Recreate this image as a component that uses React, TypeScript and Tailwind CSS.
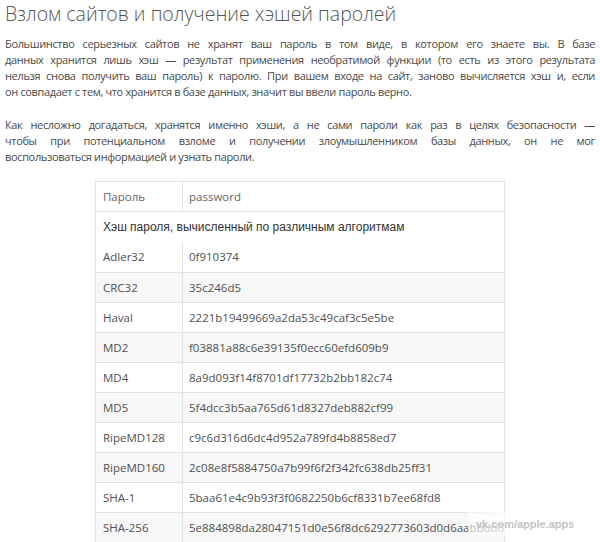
const ROWS: [string, string][] = [
  ['Adler32', '0f910374'],
  ['CRC32', '35c246d5'],
  ['Haval', '2221b19499669a2da53c49caf3c5e5be'],
  ['MD2', 'f03881a88c6e39135f0ecc60efd609b9'],
  ['MD4', '8a9d093f14f8701df17732b2bb182c74'],
  ['MD5', '5f4dcc3b5aa765d61d8327deb882cf99'],
  ['RipeMD128', 'c9c6d316d6dc4d952a789fd4b8858ed7'],
  ['RipeMD160', '2c08e8f5884750a7b99f6f2f342fc638db25ff31'],
  ['SHA-1', '5baa61e4c9b93f3f0682250b6cf8331b7ee68fd8'],
  ['SHA-256', '5e884898da28047151d0e56f8dc6292773603d0d6aabbdd62a11ef721d1542d8'],
]

const PARA_1 = [
  'Большинство серьезных сайтов не хранят ваш пароль в том виде, в котором его знаете вы. В базе',
  'данных хранится лишь хэш — результат применения необратимой функции (то есть из этого результата',
  'нельзя снова получить ваш пароль) к паролю. При вашем входе на сайт, заново вычисляется хэш и, если',
  'он совпадает с тем, что хранится в базе данных, значит вы ввели пароль верно.',
]

const PARA_2 = [
  'Как несложно догадаться, хранятся именно хэши, а не сами пароли как раз в целях безопасности —',
  'чтобы при потенциальном взломе и получении злоумышленником базы данных, он не мог',
  'воспользоваться информацией и узнать пароли.',
]

// keeps the original line breaks, every line but the last is stretched to full width
function Para({ lines, className = '' }: { lines: string[]; className?: string }) {
  return (
    <p className={className}>
      {lines.map((line, i) => (
        <span
          key={i}
          className={`block ${i < lines.length - 1 ? 'text-justify [text-align-last:justify]' : 'text-left'}`}
        >
          {line}
        </span>
      ))}
    </p>
  )
}

export default function App() {
  return (
    <div className="relative w-[600px] h-[542px] overflow-hidden bg-white text-[#4a4a4a]" style={{ fontFamily: '"Open Sans", sans-serif' }}>
      {/* Title */}
      <h1 className="px-[5px] pt-[2px] text-[19.5px] leading-[24px] font-light text-[#555]">
        Взлом сайтов и получение хэшей паролей
      </h1>

      <div className="px-[5px] mt-[10px] text-[11px] tracking-[-0.35px] leading-[16px]">
        <Para lines={PARA_1} />
        <Para lines={PARA_2} className="mt-[17px]" />
      </div>

      {/* Hash table */}
      <div className="ml-[95px] mt-[16px] w-[410px] border border-[#e2e2e2] text-[11.5px] text-[#505050]">
        <div className="flex h-[30px] border-b border-[#e2e2e2]">
          <div className="w-[87px] pl-[7px] flex items-center border-r border-[#e2e2e2] text-[#666]">Пароль</div>
          <div className="flex-1 pl-[6px] flex items-center text-[#666]">password</div>
        </div>
        <div className="h-[30px] pl-[7px] flex items-center text-[12px] text-[#333]" style={{ fontFamily: '"Liberation Sans", Arial, sans-serif' }}>
          Хэш пароля, вычисленный по различным алгоритмам
        </div>
        {ROWS.map(([name, hash], i) => (
          <div
            key={name}
            className={`flex h-[30px] ${i > 0 ? 'border-t border-[#e2e2e2]' : ''} ${i % 2 === 1 ? 'bg-[#f7f7f7]' : 'bg-white'}`}
          >
            <div className="w-[87px] shrink-0 pl-[7px] flex items-center border-r border-[#e2e2e2]">{name}</div>
            <div className="flex-1 min-w-0 pl-[6px] flex items-center whitespace-nowrap overflow-hidden">{hash}</div>
          </div>
        ))}
      </div>

      {/* Watermark */}
      <div
        className="absolute left-[468px] top-[512px] w-[132px] h-[24px] pl-[8px] flex items-center bg-gradient-to-r from-white/60 to-white text-[11px] font-bold text-[#c4c4c4]"
        style={{ fontFamily: '"Liberation Sans", Arial, sans-serif' }}
      >
        vk.com/apple.apps
      </div>
    </div>
  )
}
